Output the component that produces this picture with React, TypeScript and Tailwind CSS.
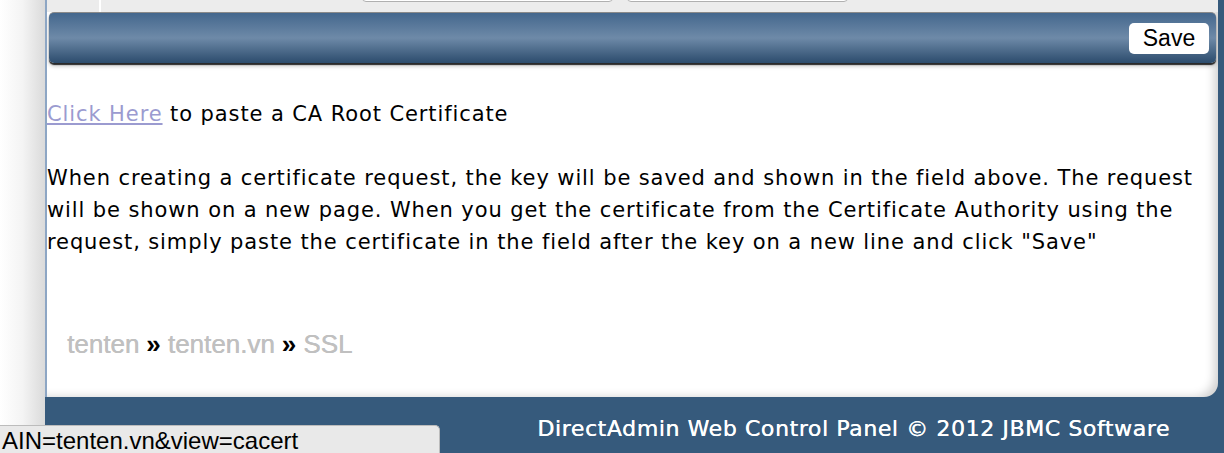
import React from 'react';

const App: React.FC = () => {
  return (
    <div className="relative flex h-[453px] w-[1224px] overflow-hidden bg-[#365a7c]">
      {/* left page margin */}
      <div className="h-full w-[45px] shrink-0 bg-gradient-to-r from-white via-[#f4f4f4] to-[#dadada]" />

      <div className="flex min-w-0 flex-1 flex-col">
        {/* main panel */}
        <div className="flex h-[397px] flex-col overflow-hidden rounded-br-[14px] border-l-2 border-[#8da6c4] bg-white shadow-[inset_-10px_-6px_10px_-6px_rgba(0,0,0,0.18)] mr-[6px]">
          {/* top strip with form fields cut off */}
          <div className="relative h-[12px] shrink-0 bg-[#ececec]">
            <div className="absolute left-[52px] top-0 h-full w-[2px] bg-white" />
            <div className="absolute left-[315px] top-[-6px] h-[8px] w-[251px] rounded-b-[4px] border border-[#b0b0b0] bg-white" />
            <div className="absolute left-[580px] top-[-6px] h-[8px] w-[221px] rounded-b-[4px] border border-[#b0b0b0] bg-white" />
          </div>

          {/* action bar */}
          <div className="mx-[2px] flex h-[51px] shrink-0 items-center justify-end rounded-[5px] border-t border-[#8a8a8a] bg-gradient-to-b from-[#44678d] via-[#6e8aa8] to-[#2c4c6d] pr-[7px] shadow-[0_2px_1px_#2a2a2a,0_3px_4px_rgba(0,0,0,0.25)]">
            <button className="h-[31px] w-[80px] rounded-[5px] bg-white font-['Liberation_Sans',Arial,sans-serif] text-[23px] leading-none text-black">
              Save
            </button>
          </div>

          {/* body text */}
          <div className="pr-[14px] font-['DejaVu_Sans',Verdana,sans-serif] text-[21px] leading-[32px] tracking-[0.9px] text-black">
            <p className="mt-[35px]">
              <a href="#" className="text-[#9b9bd0] underline">Click Here</a> to paste a CA Root Certificate
            </p>
            <p className="mt-[32px]">
              When creating a certificate request, the key will be saved and shown in the field above. The request will be shown on a new page. When you get the certificate from the Certificate Authority using the request, simply paste the certificate in the field after the key on a new line and click "Save"
            </p>
          </div>

          {/* breadcrumb */}
          <div className="mt-[67px] pl-[20px] font-['Liberation_Sans',Arial,sans-serif] text-[26px] text-[#c0c0c0] [text-shadow:0.4px_0_0_#c0c0c0]">
            <span>tenten</span>
            <span className="mx-[7px] font-bold text-black [text-shadow:none]">»</span>
            <span>tenten.vn</span>
            <span className="mx-[7px] font-bold text-black [text-shadow:none]">»</span>
            <span>SSL</span>
          </div>
        </div>

        {/* footer */}
        <div className="flex flex-1 items-center justify-end pr-[54px] pt-[6px] font-['DejaVu_Sans',Verdana,sans-serif] text-[22px] tracking-[0.6px] text-white [text-shadow:0.3px_0_0_#fff]">
          DirectAdmin Web Control Panel © 2012 JBMC Software
        </div>
      </div>

      {/* browser status bar */}
      <div className="absolute bottom-0 left-0 flex h-[28px] w-[440px] items-center rounded-tr-[5px] border-r border-t border-[#bcbcbc] bg-[#e9e9e9] pl-[2px] pt-[3px] font-['Liberation_Sans',Arial,sans-serif] text-[24px] text-black">
        AIN=tenten.vn&amp;view=cacert
      </div>
    </div>
  );
};

export default App;
